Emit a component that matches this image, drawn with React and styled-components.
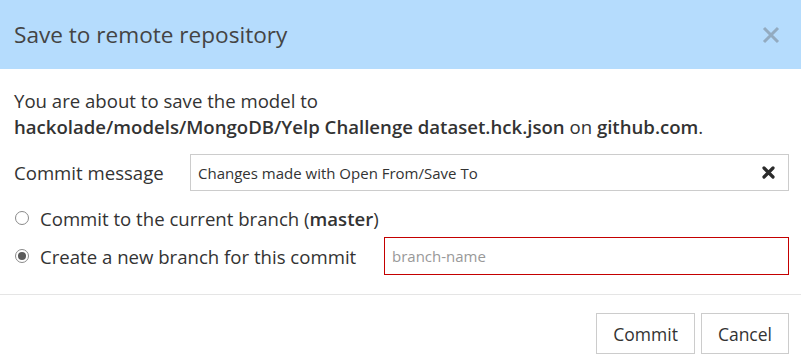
import React from 'react';
import styled, { createGlobalStyle } from 'styled-components';

const GlobalStyle = createGlobalStyle`
    body {
        margin: 0;
        background: #fff;
        font-family: "Open Sans", "Liberation Sans", sans-serif;
        color: #333;
    }
`;

const Dialog = styled.div`
    width: 801px;
    height: 364px;
    background: #fff;
    display: flex;
    flex-direction: column;
`;

const Header = styled.div`
    height: 69px;
    background: #b5dcfd;
    display: flex;
    align-items: center;
    justify-content: space-between;
    padding: 0 21px 0 14px;
`;

const Title = styled.h1`
    margin: 0;
    font-size: 22.6px;
    font-weight: 400;
    color: #444;
`;

const CloseButton = styled.button`
    border: 0;
    background: none;
    padding: 0;
    width: 18px;
    height: 18px;
    display: flex;
    cursor: pointer;
`;

const Body = styled.div`
    padding: 19px 12px 19px 14px;
    border-bottom: 1px solid #e5e5e5;
`;

const Intro = styled.p`
    margin: 0 0 14px;
    font-size: 18.6px;
    line-height: 26px;
    color: #333;
    b {
        font-weight: 600;
    }
`;

const FieldRow = styled.div`
    display: flex;
    align-items: center;
    height: ${p => p.h || 38}px;
    margin-bottom: ${p => p.mb || 0}px;
`;

const Label = styled.label`
    width: 176px;
    flex: 0 0 176px;
    font-size: 18.6px;
`;

const InputWrap = styled.div`
    position: relative;
    flex: 1;
    display: flex;
`;

const TextInput = styled.input`
    flex: 1;
    height: ${p => p.h || 37}px;
    box-sizing: border-box;
    border: 1px solid ${p => (p.invalid ? '#c40000' : '#ccc')};
    padding: 0 30px 0 7px;
    font-family: "Open Sans", "Liberation Sans", sans-serif;
    font-size: 15px;
    color: #333;
    outline: none;
    &::placeholder {
        color: #999;
    }
`;

const ClearIcon = styled.span`
    position: absolute;
    right: 14px;
    top: 12px;
    width: 13px;
    height: 13px;
    display: flex;
`;

const RadioLabel = styled.label`
    display: flex;
    align-items: center;
    font-size: 18.6px;
    width: ${p => (p.w ? p.w + 'px' : 'auto')};
    flex: ${p => (p.w ? `0 0 ${p.w}px` : '0 0 auto')};
    b {
        font-weight: 600;
    }
`;

const RadioDot = styled.span`
    width: 14px;
    height: 14px;
    box-sizing: border-box;
    border: 1px solid #8a8a8a;
    border-radius: 50%;
    margin: 0 11px 0 1px;
    display: flex;
    align-items: center;
    justify-content: center;
    &::after {
        content: '';
        width: 8px;
        height: 8px;
        border-radius: 50%;
        background: ${p => (p.checked ? '#5a5a5a' : 'transparent')};
    }
`;

const Footer = styled.div`
    display: flex;
    justify-content: flex-end;
    gap: 6px;
    padding: 18px 12px 10px;
`;

const Button = styled.button`
    height: 41px;
    padding: 0 16px;
    background: #fff;
    border: 1px solid #ccc;
    font-family: "Open Sans", "Liberation Sans", sans-serif;
    font-size: 17.5px;
    color: #333;
    cursor: pointer;
`;

const App = () => (
    <Dialog>
        <GlobalStyle />
        <Header>
            <Title>Save to remote repository</Title>
            <CloseButton aria-label="Close">
                <svg width="18" height="18" viewBox="0 0 18 18">
                    <path d="M2 2 L16 16 M16 2 L2 16" stroke="#93abc0" strokeWidth="3" />
                </svg>
            </CloseButton>
        </Header>
        <Body>
            <Intro>
                You are about to save the model to<br />
                <b>hackolade/models/MongoDB/Yelp Challenge dataset.hck.json</b> on <b>github.com</b>.
            </Intro>
            <FieldRow h={37} mb={8}>
                <Label>Commit message</Label>
                <InputWrap>
                    <TextInput readOnly defaultValue="Changes made with Open From/Save To" />
                    <ClearIcon>
                        <svg width="13" height="13" viewBox="0 0 13 13">
                            <path d="M2 2 L11 11 M11 2 L2 11" stroke="#2b2b2b" strokeWidth="3.2" strokeLinecap="round" />
                        </svg>
                    </ClearIcon>
                </InputWrap>
            </FieldRow>
            <FieldRow>
                <RadioLabel>
                    <RadioDot />
                    Commit to the current branch (<b>master</b>)
                </RadioLabel>
            </FieldRow>
            <FieldRow>
                <RadioLabel w={370}>
                    <RadioDot checked />
                    Create a new branch for this commit
                </RadioLabel>
                <InputWrap>
                    <TextInput h={38} invalid placeholder="branch-name" />
                </InputWrap>
            </FieldRow>
        </Body>
        <Footer>
            <Button>Commit</Button>
            <Button>Cancel</Button>
        </Footer>
    </Dialog>
);

export default App;
